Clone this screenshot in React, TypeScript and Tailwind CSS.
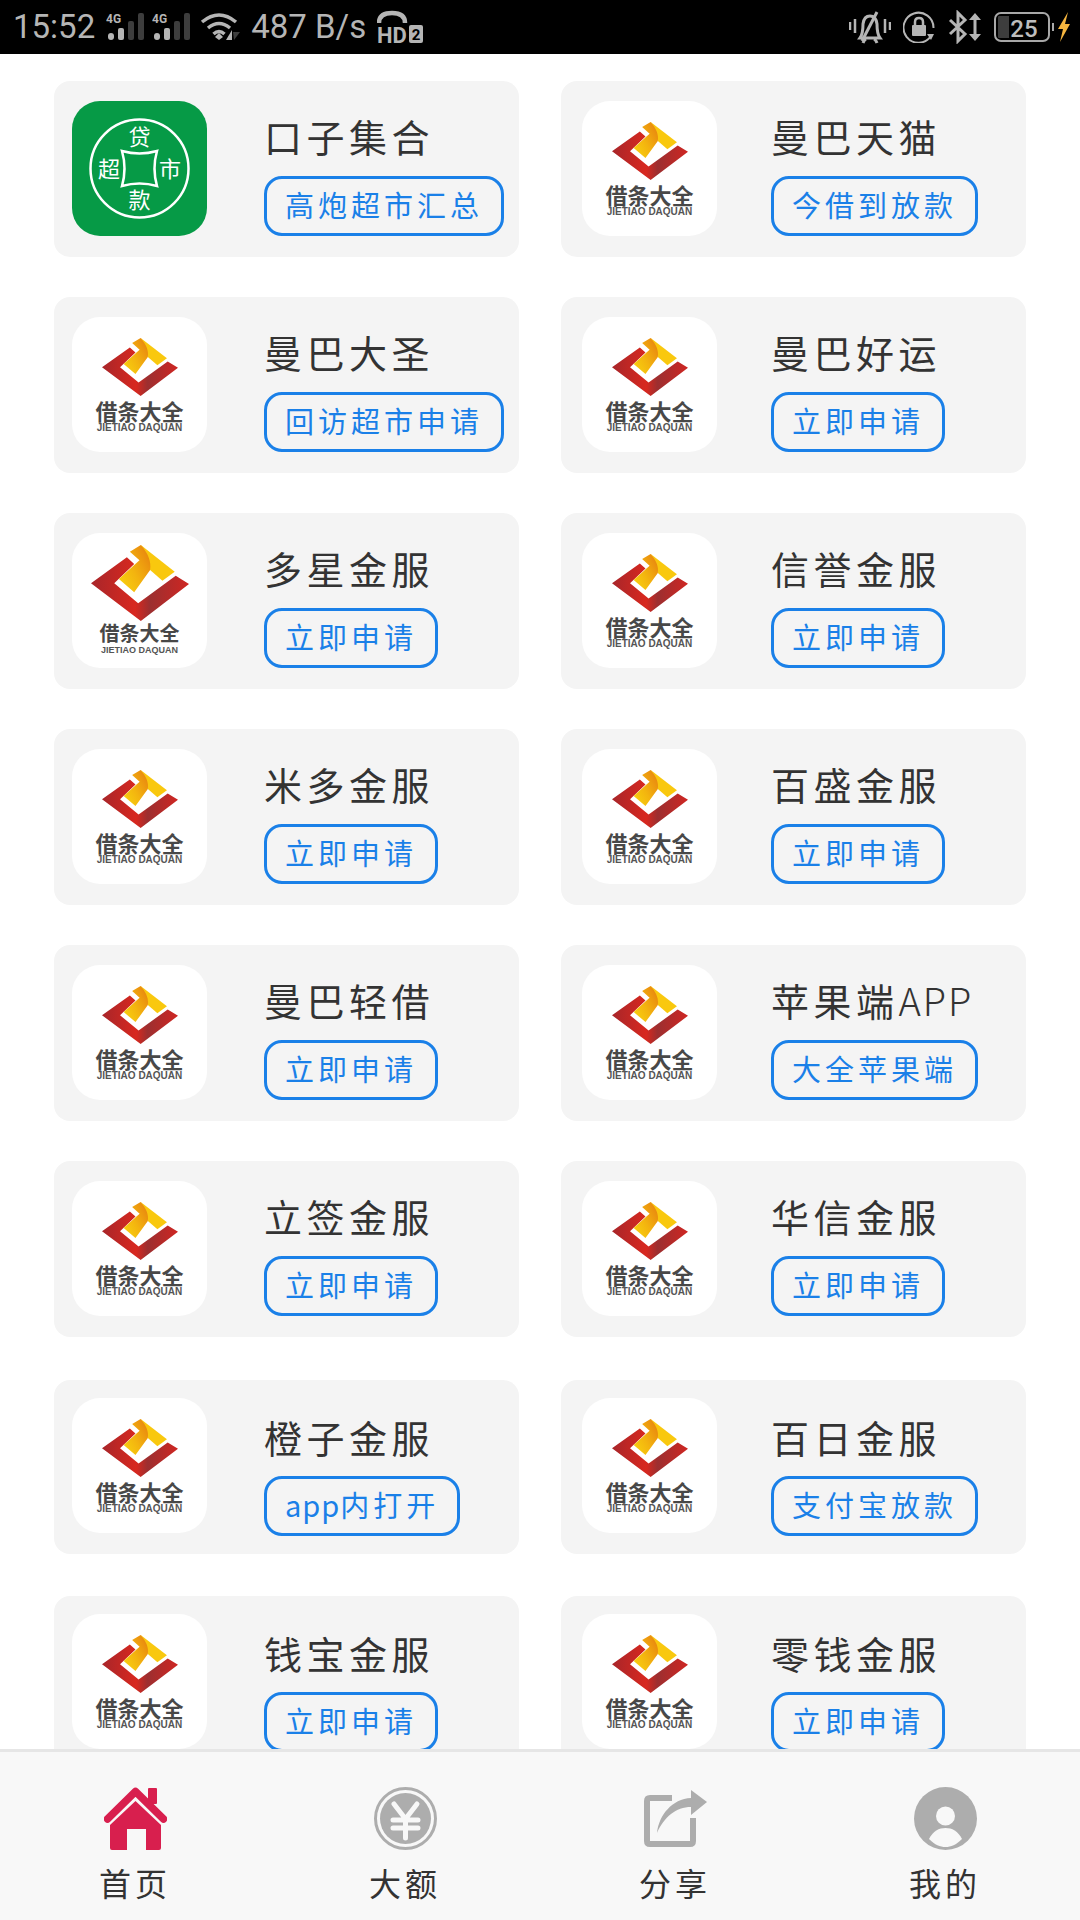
import clsx from "clsx";

type Item = { title: React.ReactNode; action: React.ReactNode; icon?: "coin" | "big" };

const rows: Item[][] = [
  [
    { title: "口子集合", action: "高炮超市汇总", icon: "coin" },
    { title: "曼巴天猫", action: "今借到放款" },
  ],
  [
    { title: "曼巴大圣", action: "回访超市申请" },
    { title: "曼巴好运", action: "立即申请" },
  ],
  [
    { title: "多星金服", action: "立即申请", icon: "big" },
    { title: "信誉金服", action: "立即申请" },
  ],
  [
    { title: "米多金服", action: "立即申请" },
    { title: "百盛金服", action: "立即申请" },
  ],
  [
    { title: "曼巴轻借", action: "立即申请" },
    {
      title: (
        <>
          苹果端<span className="tracking-[2px] font-light">APP</span>
        </>
      ),
      action: "大全苹果端",
    },
  ],
  [
    { title: "立签金服", action: "立即申请" },
    { title: "华信金服", action: "立即申请" },
  ],
  [
    {
      title: "橙子金服",
      action: (
        <>
          <span className="tracking-[1px]">app</span>内打开
        </>
      ),
    },
    { title: "百日金服", action: "支付宝放款" },
  ],
  [
    { title: "钱宝金服", action: "立即申请" },
    { title: "零钱金服", action: "立即申请" },
  ],
];

function Diamond({ id, className }: { id: string; className: string }) {
  return (
    <svg viewBox="0 0 295 228" preserveAspectRatio="none" className={className}>
      <defs>
        <linearGradient id={`${id}-red`} x1="0" y1="0" x2="1" y2="0">
          <stop offset="0" stopColor="#a8262a" />
          <stop offset="0.45" stopColor="#d8281f" />
          <stop offset="0.6" stopColor="#9c2f30" />
          <stop offset="1" stopColor="#cf2622" />
        </linearGradient>
        <linearGradient id={`${id}-gold`} x1="0" y1="1" x2="1" y2="0.2">
          <stop offset="0" stopColor="#f9d50e" />
          <stop offset="0.5" stopColor="#f3b40f" />
          <stop offset="1" stopColor="#e8860f" />
        </linearGradient>
      </defs>
      <path
        d="M0 115 L108 37 L130 57 L70 115 L142 175 L255 92 L295 117 L150 228 Z"
        fill={`url(#${id}-red)`}
      />
      <path d="M150 0 L252 80 L215 107 L178 75 Z" fill="#f9c80e" />
      <path
        d="M117 20 L150 0 C172 25 182 50 178 75 L130 142 L84 102 L146 46 Z"
        fill={`url(#${id}-gold)`}
      />
    </svg>
  );
}

function LoanLogo({ id, big }: { id: string; big?: boolean }) {
  return (
    <div className="w-[135px] h-[135px] bg-white rounded-[28px] flex flex-col items-center shrink-0 overflow-hidden">
      <Diamond
        id={id}
        className={clsx(big ? "w-[98px] h-[76px] mt-[12px]" : "w-[76px] h-[58px] mt-[21px]")}
      />
      <div
        className={clsx(
          "text-[#484848] font-bold whitespace-nowrap",
          big ? "text-[20px] leading-[20px] mt-[2px]" : "text-[22px] leading-[22px] mt-[3px]",
        )}
      >
        借条大全
      </div>
      <div
        className={clsx(
          "font-['Liberation_Sans',sans-serif] font-bold text-[#555] whitespace-nowrap mt-[2px]",
          big ? "text-[9px] leading-[10px]" : "text-[10px] leading-[10px]",
        )}
      >
        JIETIAO DAQUAN
      </div>
    </div>
  );
}

function CoinLogo() {
  return (
    <div className="w-[135px] h-[135px] bg-[#069a46] rounded-[28px] shrink-0">
      <svg viewBox="0 0 135 135" className="w-full h-full">
        <circle cx="67.5" cy="67.5" r="49" fill="none" stroke="#fff" strokeWidth="2.5" />
        <path
          d="M50 50 Q67.5 55 85 50 Q80 67.5 85 85 Q67.5 80 50 85 Q55 67.5 50 50 Z"
          fill="none"
          stroke="#fff"
          strokeWidth="2.5"
        />
        <g fill="#fff" fontSize="22" textAnchor="middle">
          <text x="67.5" y="44">贷</text>
          <text x="67.5" y="107">款</text>
          <text x="37" y="76">超</text>
          <text x="98" y="76">市</text>
        </g>
      </svg>
    </div>
  );
}

function Card({ item, id, index, col }: { item: Item; id: string; index: number; col: number }) {
  const late = index >= 6;
  return (
    <div
      className={clsx(
        "bg-[#f4f4f4] rounded-[16px] flex items-start",
        col === 0 ? "pl-[18px]" : "pl-[21px]",
        late ? "h-[174px] pt-[18px]" : "h-[176px] pt-[20px]",
      )}
    >
      {item.icon === "coin" ? <CoinLogo /> : <LoanLogo id={id} big={item.icon === "big"} />}
      <div
        className={clsx(
          "flex flex-col items-start",
          col === 0 ? "ml-[57px]" : "ml-[54px]",
          late ? "pt-[19px]" : "pt-[15px]",
        )}
      >
        <div className="text-[38px] leading-[40px] tracking-[4.5px] text-[#333] whitespace-nowrap">
          {item.title}
        </div>
        <div
          className={clsx(
            "h-[60px] border-[3px] border-[#1a80e8] rounded-[18px] pl-[18px] pr-[18px] pb-[2px] flex items-center text-[29px] tracking-[4px] text-[#1a80e8] whitespace-nowrap",
            late ? "mt-[19px]" : "mt-[20px]",
          )}
        >
          {item.action}
        </div>
      </div>
    </div>
  );
}

function Signal() {
  return (
    <svg viewBox="0 0 38 28" className="w-[38px] h-[28px]">
      <text x="0" y="10" fontSize="12" fontWeight="700" fill="#b5b5b5" fontFamily="Roboto, sans-serif">
        4G
      </text>
      <rect x="2" y="20" width="6" height="7" rx="3" fill="#b5b5b5" />
      <rect x="12" y="15" width="6" height="12" rx="2" fill="#b5b5b5" />
      <rect x="22" y="8" width="6" height="19" rx="2" fill="#3d3d3d" />
      <rect x="32" y="0" width="6" height="27" rx="2" fill="#3d3d3d" />
    </svg>
  );
}

function Wifi() {
  return (
    <svg viewBox="0 0 40 28" className="w-[40px] h-[28px] ml-[10px]" fill="none" stroke="#b5b5b5" strokeWidth="3.5">
      <path d="M2 9 Q19 -5 36 9" />
      <path d="M8 15 Q19 6 30 15" />
      <path d="M13.5 21 Q19 16 24.5 21" />
      <path d="M15 24 L19 20 L23 24 L19 27 Z" fill="#b5b5b5" stroke="none" />
      <path d="M32 17 V27 H26 Z" fill="#b5b5b5" stroke="none" />
      <path d="M33 19 H40 L34 27 Z" fill="#3d3d3d" stroke="none" />
    </svg>
  );
}

function Hd() {
  return (
    <svg viewBox="0 0 46 34" className="w-[46px] h-[34px] ml-[11px]">
      <path d="M2 13 Q2 3 15 3 Q28 3 28 13" fill="none" stroke="#b5b5b5" strokeWidth="4.5" />
      <text x="0" y="33" fontSize="22" fontWeight="700" fill="#b5b5b5" fontFamily="Roboto, sans-serif">
        HD
      </text>
      <rect x="32" y="15" width="14" height="18" rx="2" fill="#b5b5b5" />
      <text x="39" y="30" fontSize="15" fontWeight="700" fill="#000" textAnchor="middle" fontFamily="Roboto, sans-serif">
        2
      </text>
    </svg>
  );
}

function MuteBell() {
  return (
    <svg viewBox="0 0 42 34" className="w-[42px] h-[34px]" fill="none" stroke="#b5b5b5" strokeWidth="2.5">
      <path d="M1 12 V20 M6 9 V23 M36 9 V23 M41 12 V20" />
      <path d="M11 28 Q14 24 14 14 Q15 6 21 6 Q27 6 28 14 Q28 24 31 28 Z" strokeWidth="3" />
      <path d="M14 33 Q15 30 17 29 M25 29 Q27 30 28 33" strokeWidth="3" />
      <path d="M13 31 L28 2" strokeWidth="3" />
    </svg>
  );
}

function RotationLock() {
  return (
    <svg viewBox="0 0 32 32" className="w-[32px] h-[32px] ml-[12px]" fill="none" stroke="#b5b5b5" strokeWidth="2">
      <path d="M28 25 A15 15 0 1 1 30.5 17" />
      <path d="M24 23 L28 29 L31 23 Z" fill="#b5b5b5" stroke="none" />
      <rect x="9" y="14" width="14" height="11" rx="1" fill="#b5b5b5" stroke="none" />
      <path d="M12 14 V11 Q12 7 16 7 Q20 7 20 11 V14" strokeWidth="2.5" />
    </svg>
  );
}

function BluetoothArrows() {
  return (
    <svg viewBox="0 0 33 34" className="w-[33px] h-[34px] ml-[13px]" fill="none" stroke="#b5b5b5" strokeWidth="3">
      <path d="M2 10 L17 24 L10 31 V3 L17 10 L2 24" />
      <path d="M27 3 L21 10 H33 Z M27 31 L21 24 H33 Z" fill="#b5b5b5" stroke="none" />
      <path d="M27 9 V25" />
    </svg>
  );
}

function Battery() {
  return (
    <svg viewBox="0 0 76 32" className="w-[76px] h-[32px] ml-[13px]">
      <rect x="1" y="2" width="54" height="28" rx="6" fill="none" stroke="#a8a8a8" strokeWidth="2" />
      <path d="M5 5 H15 V27 H5 Q4 27 4 26 V6 Q4 5 5 5 Z" fill="#3d3d3d" />
      <text x="30" y="26" fontSize="24" fontWeight="500" textAnchor="middle" fill="#bdbdbd" fontFamily="Roboto, sans-serif">
        25
      </text>
      <rect x="58" y="12" width="2" height="8" fill="#a8a8a8" />
      <path d="M74 1 L64 18 H69 L66 31 L76 13 H71 Z" fill="#f5b53f" />
    </svg>
  );
}

function StatusBar() {
  return (
    <div className="h-[54px] bg-black flex items-center justify-between pl-[13px] pr-[10px] font-['Roboto',sans-serif] text-[#b5b5b5] shrink-0">
      <div className="flex items-center">
        <span className="text-[33px] leading-[40px] mr-[11px]">15:52</span>
        <Signal />
        <span className="w-[8px]" />
        <Signal />
        <Wifi />
        <span className="text-[33px] leading-[40px] ml-[11px]">487 B/s</span>
        <Hd />
      </div>
      <div className="flex items-center">
        <MuteBell />
        <RotationLock />
        <BluetoothArrows />
        <Battery />
      </div>
    </div>
  );
}

function HomeIcon() {
  return (
    <svg viewBox="0 0 63 63" className="w-[63px] h-[63px]" fill="#d81f4e">
      <rect x="44" y="1" width="9" height="16" rx="1" />
      <path d="M3.5 32 L31.5 4.5 L59.5 32" fill="none" stroke="#d81f4e" strokeWidth="7.5" strokeLinecap="round" strokeLinejoin="round" />
      <path d="M31.5 14 L57 38 V61 Q57 63 55 63 H42 V42 H23 V63 H8 Q6 63 6 61 V38 Z" />
    </svg>
  );
}

function YuanIcon() {
  return (
    <svg viewBox="0 0 63 63" className="w-[63px] h-[63px]">
      <circle cx="31.5" cy="31.5" r="30" fill="none" stroke="#adadad" strokeWidth="3" />
      <circle cx="31.5" cy="31.5" r="25.5" fill="#adadad" />
      <path
        d="M20 17 L31.5 32 L43 17 M19 33 H44 M19 41 H44 M31.5 32 V51"
        fill="none"
        stroke="#f8f8f8"
        strokeWidth="5"
        strokeLinecap="round"
      />
    </svg>
  );
}

function ShareIcon() {
  return (
    <svg viewBox="0 0 63 63" className="w-[63px] h-[63px]">
      <path
        d="M28 11 H6 Q3 11 3 14 V54 Q3 57 6 57 H46 Q49 57 49 54 V31"
        fill="none"
        stroke="#adadad"
        strokeWidth="6"
      />
      <path d="M13 46 C15 28 28 12 47 11 V3 L63 15 L47 28 V20 C32 20 20 30 13 46 Z" fill="#adadad" />
    </svg>
  );
}

function UserIcon() {
  return (
    <svg viewBox="0 0 63 63" className="w-[63px] h-[63px]">
      <circle cx="31.5" cy="31.5" r="31.5" fill="#adadad" />
      <circle cx="31.5" cy="29" r="9.5" fill="#f8f8f8" />
      <path d="M15 52 C19 44 25 41 31.5 41 C38 41 44 44 48 52 C42 58 37 60 31.5 60 C26 60 21 58 15 52 Z" fill="#f8f8f8" />
    </svg>
  );
}

const tabs = [
  { label: "首页", icon: <HomeIcon /> },
  { label: "大额", icon: <YuanIcon /> },
  { label: "分享", icon: <ShareIcon /> },
  { label: "我的", icon: <UserIcon /> },
];

function TabBar() {
  return (
    <div className="h-[171px] shrink-0 bg-[#f8f8f8] border-t-[3px] border-[#e6e6e6] grid grid-cols-4 pt-[35px]">
      {tabs.map((tab) => (
        <div key={tab.label} className="flex flex-col items-center">
          {tab.icon}
          <span className="mt-[12px] text-[32px] leading-[40px] tracking-[4px] text-[#333]">
            {tab.label}
          </span>
        </div>
      ))}
    </div>
  );
}

export default function App() {
  return (
    <div className="w-[1080px] h-[1920px] flex flex-col bg-white overflow-hidden font-['Noto_Sans_CJK_SC',sans-serif]">
      <StatusBar />
      <div className="flex-1 overflow-hidden pt-[27px] px-[54px]">
        <div className="grid grid-cols-2 gap-x-[42px]">
          {rows.map((row, r) =>
            row.map((item, c) => (
              <div
                key={`${r}-${c}`}
                className={clsx(
                  r < 5 && "mb-[40px]",
                  r === 5 && "mb-[43px]",
                  r === 6 && "mb-[42px]",
                )}
              >
                <Card item={item} id={`logo-${r}-${c}`} index={r} col={c} />
              </div>
            )),
          )}
        </div>
      </div>
      <TabBar />
    </div>
  );
}
